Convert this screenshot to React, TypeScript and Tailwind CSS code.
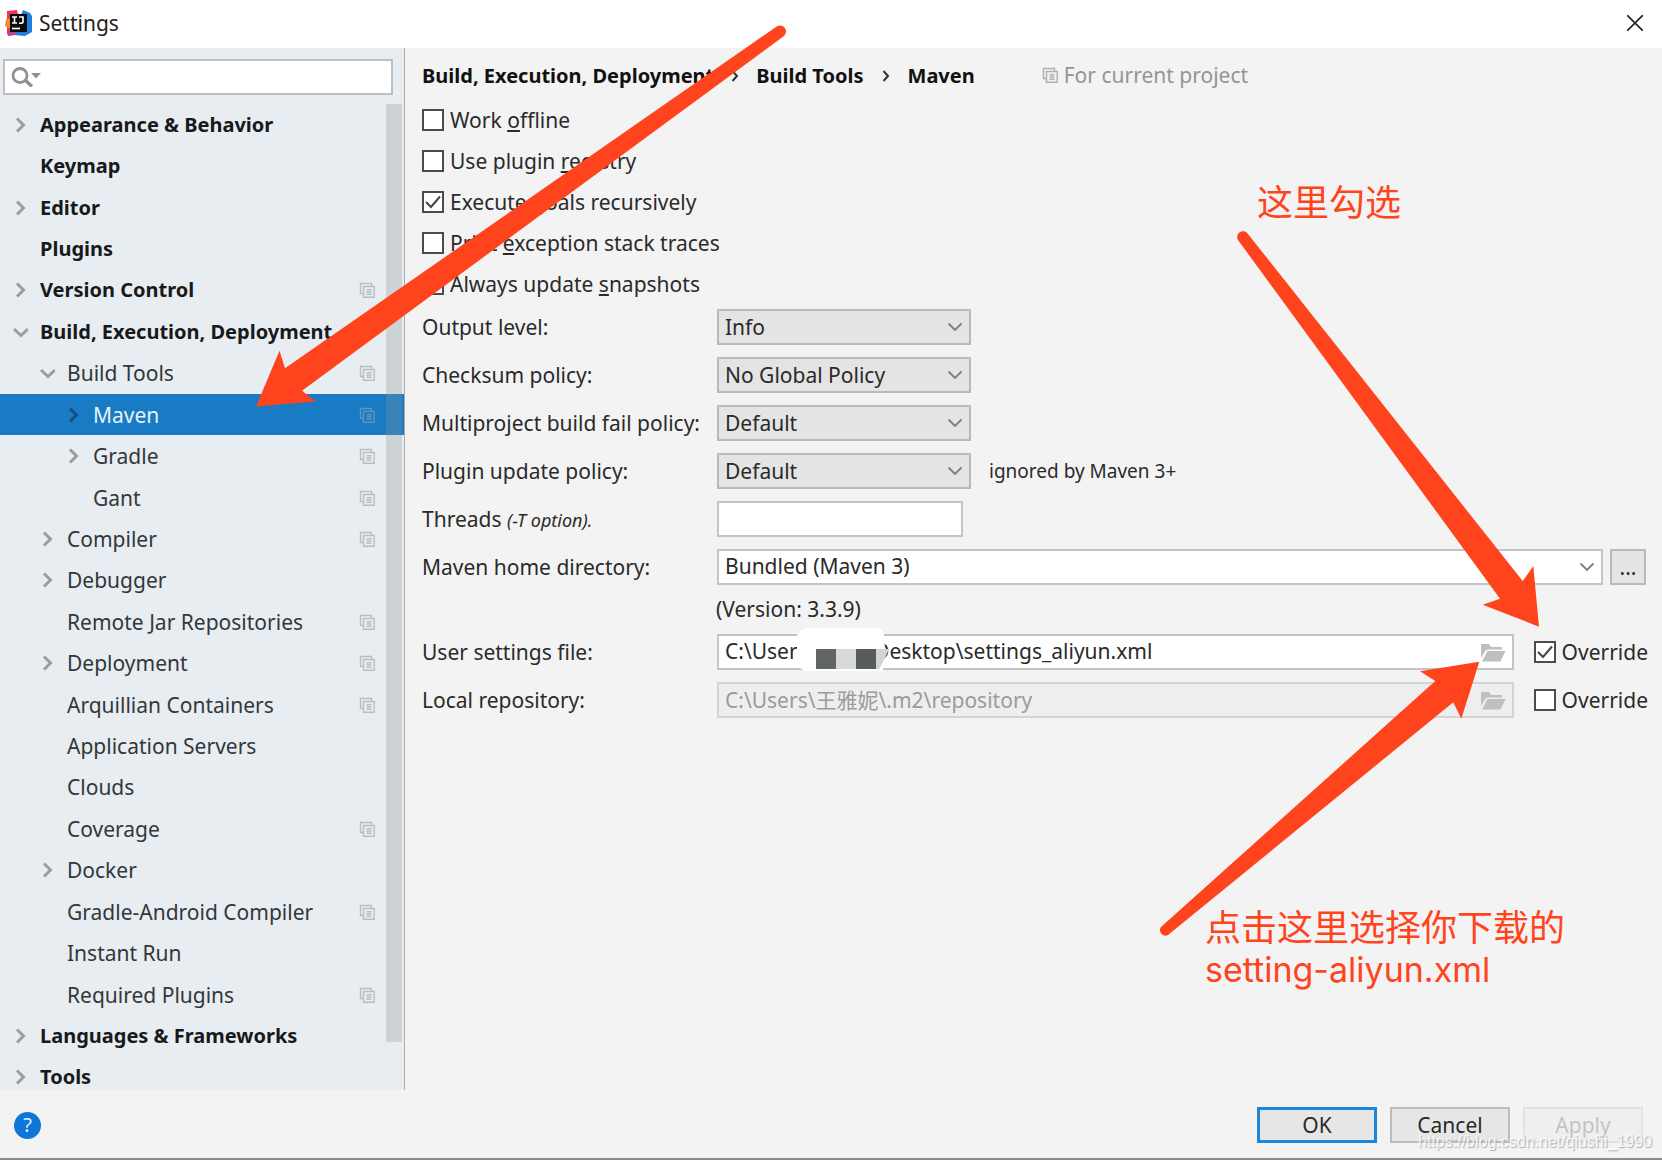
import { useState } from "react";
import type { ReactNode } from "react";

type TreeItem = {
  label: string;
  level: 0 | 1 | 2;
  arrow?: "open" | "closed";
  project?: boolean;
};

const treeItems: TreeItem[] = [
  { label: "Appearance & Behavior", level: 0, arrow: "closed" },
  { label: "Keymap", level: 0 },
  { label: "Editor", level: 0, arrow: "closed" },
  { label: "Plugins", level: 0 },
  { label: "Version Control", level: 0, arrow: "closed", project: true },
  { label: "Build, Execution, Deployment", level: 0, arrow: "open" },
  { label: "Build Tools", level: 1, arrow: "open", project: true },
  { label: "Maven", level: 2, arrow: "closed", project: true },
  { label: "Gradle", level: 2, arrow: "closed", project: true },
  { label: "Gant", level: 2, project: true },
  { label: "Compiler", level: 1, arrow: "closed", project: true },
  { label: "Debugger", level: 1, arrow: "closed" },
  { label: "Remote Jar Repositories", level: 1, project: true },
  { label: "Deployment", level: 1, arrow: "closed", project: true },
  { label: "Arquillian Containers", level: 1, project: true },
  { label: "Application Servers", level: 1 },
  { label: "Clouds", level: 1 },
  { label: "Coverage", level: 1, project: true },
  { label: "Docker", level: 1, arrow: "closed" },
  { label: "Gradle-Android Compiler", level: 1, project: true },
  { label: "Instant Run", level: 1 },
  { label: "Required Plugins", level: 1, project: true },
  { label: "Languages & Frameworks", level: 0, arrow: "closed" },
  { label: "Tools", level: 0, arrow: "closed" },
];

const indent = ["pl-3", "pl-[39px]", "pl-[65px]"];

const options: { id: string; checked: boolean; text: ReactNode }[] = [
  { id: "offline", checked: false, text: <>Work <u>o</u>ffline</> },
  { id: "registry", checked: false, text: <>Use plugin <u>r</u>egistry</> },
  { id: "recursive", checked: true, text: <>Execute <u>g</u>oals recursively</> },
  { id: "traces", checked: false, text: <>Print <u>e</u>xception stack traces</> },
  { id: "snapshots", checked: false, text: <>Always update <u>s</u>napshots</> },
];

const policies = [
  { id: "output", label: "Output level:", values: ["Info", "Debug", "Warn", "Error"] },
  { id: "checksum", label: "Checksum policy:", values: ["No Global Policy", "Warn", "Fail"] },
  { id: "fail", label: "Multiproject build fail policy:", values: ["Default", "Fail Fast", "Fail Never"] },
  { id: "update", label: "Plugin update policy:", values: ["Default", "Check", "Do Not Check"], note: "ignored by Maven 3+" },
];

function IdeaLogo() {
  return (
    <svg className="size-7" viewBox="0 0 28 28" aria-hidden="true">
      <path d="M2 2 L12 1 L15 14 L6 27 L2 24 Z" fill="#e8365d" />
      <path d="M1 10 L8 9 L8 21 L0 17 Z" fill="#f58a2c" />
      <path d="M18 1 L25 4 L27 7 L27 23 L20 27 L9 26 L16 6 Z" fill="#1f7fe0" />
      <path d="M2 24 L14 20 L10 26 L3 27 Z" fill="#b8468f" />
      <rect x="5" y="5" width="17" height="18" fill="#0b0b0d" />
      <path d="M7 8 h5 M9.500 8 v6 M7 14 h5 M14 8 h4 v4.500 q0 1.800 -2 1.800 h-2" fill="none" stroke="#fff" strokeWidth="1.600" />
      <path d="M7 19.500 h8" stroke="#fff" strokeWidth="1.700" />
    </svg>
  );
}

function TreeArrow({ kind, dark }: { kind: "open" | "closed"; dark?: boolean }) {
  return (
    <svg className="size-4" viewBox="0 0 16 16" fill="none" stroke={dark ? "#14507f" : "#9a9ea1"} strokeWidth="3" aria-hidden="true">
      <path d={kind === "open" ? "M2 5 L9 11.500 L16 5" : "M5 1.500 L11.500 8 L5 14.500"} />
    </svg>
  );
}

function ProjectIcon({ className }: { className?: string }) {
  return (
    <svg className={className} viewBox="0 0 16 16" fill="none" stroke="currentColor" strokeWidth="1.400" aria-hidden="true">
      <path d="M4 11.500 H1.500 V1.500 H12.500 V4" />
      <path d="M4.500 4.500 H15.200 V15.200 H4.500 Z" />
      <path d="M7.500 7.800 H12.500 M7.500 10 H12.500 M7.500 12.300 H12.500" />
    </svg>
  );
}

function SelectArrow() {
  return (
    <svg className="pointer-events-none absolute right-2 top-3 h-3 w-4" viewBox="0 0 16 12" fill="none" stroke="#7d7d7d" strokeWidth="1.800" aria-hidden="true">
      <path d="M1.500 2.500 L8 9 L14.500 2.500" />
    </svg>
  );
}

function FolderIcon() {
  return (
    <svg className="pointer-events-none absolute right-2 top-2 h-5 w-[26px]" viewBox="0 0 26 20" fill="#bcc0c0" aria-hidden="true">
      <path d="M1 2 H9 L11 5 H22 V7.500 H8 L5.500 8.500 L1 16 Z" />
      <path d="M7.500 9 H25.500 L20.500 19.500 H2 Z" />
    </svg>
  );
}

function CheckBox({ id, checked, children }: { id: string; checked: boolean; children: ReactNode }) {
  return (
    <div className="flex items-center gap-1.5">
      <span className="relative flex">
        <input id={id} type="checkbox" defaultChecked={checked} className="peer size-[22px] appearance-none border-2 border-[#4b4b4b] bg-white" />
        <svg className="pointer-events-none absolute inset-0 hidden size-[22px] peer-checked:block" viewBox="0 0 22 22" fill="none" stroke="#444" strokeWidth="2" aria-hidden="true">
          <path d="M4 11 L9 16 L18 5.500" />
        </svg>
      </span>
      <label htmlFor={id}>{children}</label>
    </div>
  );
}

function PathField({ id, label, value, disabled, children }: { id: string; label: string; value: string; disabled?: boolean; children?: ReactNode }) {
  return (
    <div className="flex h-9 items-center">
      <label htmlFor={id} className="w-[295px] shrink-0">{label}</label>
      <div className="relative flex-1">
        <input
          id={id}
          defaultValue={value}
          disabled={disabled}
          className="h-9 w-full border-2 border-[#c3c5c5] bg-white px-1.5 pb-0.5 disabled:border-[#d3d4d4] disabled:bg-[#eeeeee] disabled:text-[#9b9b9b]"
        />
        {children}
        <FolderIcon />
      </div>
      <div className="pl-5">
        <CheckBox id={`${id}-override`} checked={!disabled}>Override</CheckBox>
      </div>
    </div>
  );
}

function Sidebar() {
  const [selected, setSelected] = useState("Maven");

  return (
    <aside className="relative flex w-[405px] shrink-0 flex-col overflow-hidden border-r border-[#a9aeb2] bg-[#e7edf1]">
      <div className="relative ml-[3px] mr-[11px] mt-[11px]">
        <input aria-label="Search settings" className="h-9 w-full border-2 border-[#bcc0c2] bg-white pl-10 pr-2" />
        <svg className="pointer-events-none absolute left-2 top-2 h-5 w-8" viewBox="0 0 32 20" fill="none" aria-hidden="true">
          <circle cx="9" cy="8.500" r="7" stroke="#919191" strokeWidth="2.800" />
          <path d="M14 13 L21 19.500" stroke="#919191" strokeWidth="3.400" />
          <path d="M20 6 H30 L25 11.500 Z" fill="#919191" />
        </svg>
      </div>

      {/* Settings tree, the last row runs under the bottom edge */}
      <ul className="-mb-2 mt-[9px] flex flex-1 flex-col">
        {treeItems.map((item) => {
          const active = item.label === selected;
          return (
            <li key={item.label} className="flex flex-1">
              <button
                type="button"
                onClick={() => setSelected(item.label)}
                className={`flex flex-1 items-center pr-[29px] text-left ${indent[item.level]} ${item.level === 0 ? "text-xl font-bold" : ""} ${active ? "bg-[#187bc4] text-[#e6f3fc]" : item.level === 0 ? "text-[#17191b]" : "text-[#33373a]"}`}
              >
                <span className="w-7 shrink-0">{item.arrow && <TreeArrow kind={item.arrow} dark={active} />}</span>
                <span className="flex-1 whitespace-nowrap">{item.label}</span>
                {item.project && <ProjectIcon className={`size-4 ${active ? "text-[#5d93bd]" : "text-[#b9bec1]"}`} />}
              </button>
            </li>
          );
        })}
      </ul>
      <div className="absolute bottom-12 right-0.5 top-14 w-4 bg-[#8d9499]/30" />
    </aside>
  );
}

function Redaction() {
  return (
    <svg className="pointer-events-none absolute left-20 top-[-6px] h-[43px] w-[92px]" viewBox="0 0 92 43" aria-hidden="true">
      <path d="M0 8 Q3 0 10 0 H80 Q86 0 87 7 L88 20 L86 43 H8 Q0 40 0 33 Z" fill="#fff" />
      <rect x="19" y="21" width="20" height="20" fill="#626565" />
      <rect x="39" y="21" width="20" height="20" fill="#d8d9d9" />
      <rect x="59" y="21" width="20" height="20" fill="#585b5b" />
      <path d="M79 21 H92 Q87 33 82 41 H79 Z" fill="#d2d3d3" />
    </svg>
  );
}

function Annotations() {
  return (
    <div className="pointer-events-none absolute inset-0 text-4xl text-[#ff431c]">
      <svg className="absolute inset-0 size-full" viewBox="0 0 1662 1160" fill="#ff431c" aria-hidden="true">
        <path d="M256 406.500 L279.500 350.700 L285 368.300 L776 27 A5.500 5.500 0 0 1 784 36 L302 390.700 L315.700 401.500 Z" />
        <path d="M1539 626.700 L1482.700 604.700 L1500 598.700 L1238 240 A5.500 5.500 0 0 1 1248 234 L1522.700 581 L1533.300 566 Z" />
        <path d="M1479.300 661.700 L1461.300 718.700 L1453.300 702.300 L1168 935 A5.500 5.500 0 0 1 1161 927 L1435.300 681 L1420 671.300 Z" />
      </svg>
      <p className="absolute left-[1257px] top-[183px] leading-10">这里勾选</p>
      <p className="absolute left-[1205px] top-[908px] font-['Inter','Noto_Sans_CJK_SC',sans-serif] leading-[41px]">
        点击这里选择你下载的
        <br />
        <span className="text-[34px]">setting-aliyun.xml</span>
      </p>
    </div>
  );
}

export default function App() {
  return (
    <div className="relative flex min-h-screen flex-col bg-[#f3f3f3] font-['Noto_Sans','Noto_Sans_CJK_SC',sans-serif] text-[21px] leading-7 text-[#2a2a2a]">
      <header className="flex h-12 items-center gap-1.5 bg-white pb-0.5 pl-[5px] pr-[17px] text-[#222]">
        <IdeaLogo />
        <h1 className="flex-1">Settings</h1>
        <button type="button" aria-label="Close" className="p-0.5">
          <svg className="size-4" viewBox="0 0 16 16" stroke="#222" strokeWidth="1.600" aria-hidden="true">
            <path d="M0 0 L16 16 M16 0 L0 16" />
          </svg>
        </button>
      </header>

      <div className="flex flex-1">
        <Sidebar />

        <main className="flex-1 pl-[17px] pr-[14px]">
          <nav className="flex h-[51px] items-center pt-1 text-xl font-bold text-[#111]">
            <span>Build, Execution, Deployment</span>
            <svg className="mx-[17px] h-3 w-2" viewBox="0 0 8 12" fill="none" stroke="#333" strokeWidth="2"><path d="M1.500 1 L6 6 L1.500 11" /></svg>
            <span>Build Tools</span>
            <svg className="mx-[18px] h-3 w-2" viewBox="0 0 8 12" fill="none" stroke="#333" strokeWidth="2"><path d="M1.500 1 L6 6 L1.500 11" /></svg>
            <span>Maven</span>
            <span className="ml-[67px] flex items-center gap-1.5 text-[21px] font-normal text-[#959595]">
              <ProjectIcon className="size-4 text-[#b0b0b0]" />
              For current project
            </span>
          </nav>

          <div>
            {options.map((option) => (
              <div key={option.id} className="flex h-[41px] items-center">
                <CheckBox id={option.id} checked={option.checked}>{option.text}</CheckBox>
              </div>
            ))}
          </div>

          <div className="flex flex-col gap-3 pt-[5px]">
            {policies.map((policy) => (
              <div key={policy.id} className="flex h-9 items-center">
                <label htmlFor={policy.id} className="w-[295px] shrink-0">{policy.label}</label>
                <div className="relative w-[254px]">
                  <select id={policy.id} className="h-9 w-full appearance-none border-2 border-[#b9b9b9] bg-[#e4e4e4] px-1.5">
                    {policy.values.map((value) => <option key={value}>{value}</option>)}
                  </select>
                  <SelectArrow />
                </div>
                {policy.note && <span className="pl-[18px] text-[19px]">{policy.note}</span>}
              </div>
            ))}

            <div className="flex h-9 items-center">
              <label htmlFor="threads" className="w-[295px] shrink-0">
                Threads <i className="text-lg">(-T option).</i>
              </label>
              <input id="threads" className="h-9 w-[246px] border-2 border-[#c3c5c5] bg-white px-1.5" />
            </div>

            <div className="flex h-9 items-center">
              <label htmlFor="home" className="w-[295px] shrink-0">Maven home directory:</label>
              <div className="relative flex-1">
                <select id="home" className="h-9 w-full appearance-none border-2 border-[#c3c5c5] bg-white px-1.5 pb-0.5">
                  <option>Bundled (Maven 3)</option>
                </select>
                <SelectArrow />
              </div>
              <button type="button" aria-label="Browse" className="ml-[7px] mr-0.5 h-9 w-9 border-2 border-[#b9b9b9] bg-[#e4e4e4]">...</button>
            </div>

            <p className="pl-[294px] leading-[25px]">(Version: 3.3.9)</p>

            <PathField id="settings-file" label="User settings file:" value={"C:\\User              Desktop\\settings_aliyun.xml"}>
              <Redaction />
            </PathField>
            <PathField id="repository" label="Local repository:" value={"C:\\Users\\王雅妮\\.m2\\repository"} disabled />
          </div>
        </main>
      </div>

      <footer className="flex h-[70px] items-center gap-[13px] border-b-2 border-[#8b8b8b] pb-1 pl-[14px] pr-[19px] pt-1.5">
        <button type="button" aria-label="Help" className="size-[27px] rounded-full bg-[#0d76d6] text-xl leading-none text-[#e6f3fc]">?</button>
        <div className="flex-1" />
        <button type="button" className="h-9 w-[120px] border-3 border-[#1b86da] bg-[#e6e6e6]">OK</button>
        <button type="button" className="h-9 w-[120px] border-2 border-[#bcbcbc] bg-[#e6e6e6]">Cancel</button>
        <button type="button" disabled className="h-9 w-[120px] border-2 border-[#e2e2e2] bg-[#efefef] text-[#c4c4c4]">Apply</button>
      </footer>

      <p className="pointer-events-none absolute bottom-1.5 right-[10px] font-['Liberation_Sans',sans-serif] text-base text-white/80 [text-shadow:1px_1px_1px_#aaa]">
        https://blog.csdn.net/qiushi_1990
      </p>
      <Annotations />
    </div>
  );
}
